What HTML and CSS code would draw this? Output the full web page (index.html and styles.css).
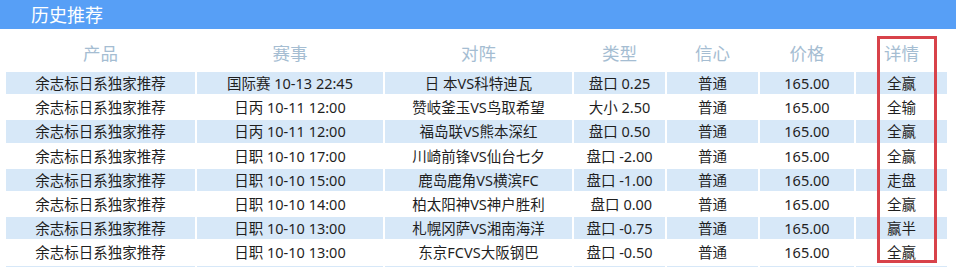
FILE: index.html
```html
<!DOCTYPE html>
<html lang="zh-CN">
<head>
<meta charset="utf-8">
<title>历史推荐</title>
<link rel="stylesheet" href="styles.css">
</head>
<body>
<div class="page">
  <div class="bar">历史推荐</div>
  <table class="hist">
    <colgroup>
      <col class="c1"><col class="c2"><col class="c3"><col class="c4"><col class="c5"><col class="c6"><col class="c7">
    </colgroup>
    <thead>
      <tr><th>产品</th><th>赛事</th><th>对阵</th><th>类型</th><th>信心</th><th>价格</th><th>详情</th></tr>
    </thead>
    <tbody>
      <tr class="alt"><td>余志标日系独家推荐</td><td>国际赛 10-13 22:45</td><td>日 本VS科特迪瓦</td><td>盘口 0.25</td><td>普通</td><td>165.00</td><td>全赢</td></tr>
      <tr><td>余志标日系独家推荐</td><td>日丙 10-11 12:00</td><td>赞岐釜玉VS鸟取希望</td><td>大小 2.50</td><td>普通</td><td>165.00</td><td>全输</td></tr>
      <tr class="alt"><td>余志标日系独家推荐</td><td>日丙 10-11 12:00</td><td>福岛联VS熊本深红</td><td>盘口 0.50</td><td>普通</td><td>165.00</td><td>全赢</td></tr>
      <tr><td>余志标日系独家推荐</td><td>日职 10-10 17:00</td><td>川崎前锋VS仙台七夕</td><td>盘口 -2.00</td><td>普通</td><td>165.00</td><td>全赢</td></tr>
      <tr class="alt"><td>余志标日系独家推荐</td><td>日职 10-10 15:00</td><td>鹿岛鹿角VS横滨FC</td><td>盘口 -1.00</td><td>普通</td><td>165.00</td><td>走盘</td></tr>
      <tr><td>余志标日系独家推荐</td><td>日职 10-10 14:00</td><td>柏太阳神VS神户胜利</td><td>&nbsp;盘口 0.00</td><td>普通</td><td>165.00</td><td>全赢</td></tr>
      <tr class="alt"><td>余志标日系独家推荐</td><td>日职 10-10 13:00</td><td>札幌冈萨VS湘南海洋</td><td>盘口 -0.75</td><td>普通</td><td>165.00</td><td>赢半</td></tr>
      <tr><td>余志标日系独家推荐</td><td>日职 10-10 13:00</td><td>东京FCVS大阪钢巴</td><td>盘口 -0.50</td><td>普通</td><td>165.00</td><td>全赢</td></tr>
      <tr class="alt"><td>&nbsp;</td><td>&nbsp;</td><td>&nbsp;</td><td>&nbsp;</td><td>&nbsp;</td><td>&nbsp;</td><td>&nbsp;</td></tr>
    </tbody>
  </table>
  <div class="mark"></div>
</div>
</body>
</html>
```

FILE: styles.css
```css
html, body {
  margin: 0;
  padding: 0;
  background: #ffffff;
}
body {
  font-family: "Noto Sans", "Noto Sans CJK SC", sans-serif;
  color: #1f1f1f;
  overflow: hidden;
}
.page {
  position: relative;
  width: 956px;
  height: 267px;
  overflow: hidden;
}
.bar {
  height: 29px;
  line-height: 29px;
  background: #579ff6;
  color: #ffffff;
  font-family: "Noto Sans CJK SC", sans-serif;
  font-size: 18px;
  padding-left: 31px;
}
.hist {
  margin-left: 4px;
  border-collapse: separate;
  border-spacing: 2px;
  table-layout: fixed;
  width: 945px;
}
.c1 { width: 189px; }
.c2 { width: 186px; }
.c3 { width: 187px; }
.c4 { width: 91px; }
.c5 { width: 91px; }
.c6 { width: 94px; }
.c7 { width: 91px; }
.hist th {
  height: 39px;
  padding: 4px 0 0;
  box-sizing: border-box;
  font-weight: normal;
  font-family: "Noto Sans CJK SC", sans-serif;
  font-size: 17.5px;
  color: #a5bdd2;
  text-align: center;
  vertical-align: middle;
}
.hist td {
  height: 22.2px;
  padding: 0;
  font-size: 14.5px;
  line-height: 22px;
  text-align: center;
  white-space: nowrap;
  overflow: hidden;
}
.hist tr.alt td {
  background: #d7e8f8;
}
.mark {
  position: absolute;
  left: 877px;
  top: 36px;
  width: 54px;
  height: 221px;
  border: 3px solid #d8424a;
}
```
